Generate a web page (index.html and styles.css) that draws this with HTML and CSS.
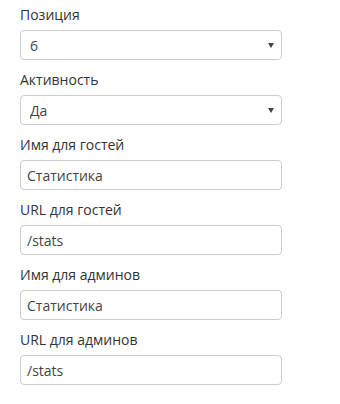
FILE: index.html
```html
<!DOCTYPE html>
<html lang="ru">
<head>
<meta charset="utf-8">
<link rel="stylesheet" href="styles.css">
</head>
<body>
<form class="form">
  <div class="group">
    <label class="label">Позиция</label>
    <div class="select-wrap">
      <select class="control select"><option>6</option></select>
      <span class="caret"></span>
    </div>
  </div>
  <div class="group">
    <label class="label">Активность</label>
    <div class="select-wrap">
      <select class="control select"><option>Да</option></select>
      <span class="caret"></span>
    </div>
  </div>
  <div class="group">
    <label class="label">Имя для гостей</label>
    <input class="control input" type="text" value="Статистика">
  </div>
  <div class="group">
    <label class="label">URL для гостей</label>
    <input class="control input" type="text" value="/stats">
  </div>
  <div class="group">
    <label class="label">Имя для админов</label>
    <input class="control input" type="text" value="Статистика">
  </div>
  <div class="group">
    <label class="label">URL для админов</label>
    <input class="control input" type="text" value="/stats">
  </div>
</form>
</body>
</html>
```

FILE: styles.css
```css
html, body {
  margin: 0;
  padding: 0;
  background: #fff;
}
body {
  font-family: "Open Sans", "Liberation Sans", sans-serif;
  font-size: 14px;
  color: #333;
}
.form {
  display: flex;
  flex-direction: column;
  gap: 10px;
  padding: 5px 0 0 20px;
  width: 262px;
}
.group {
  display: flex;
  flex-direction: column;
  gap: 5px;
}
.label {
  display: block;
  line-height: 20px;
  height: 20px;
  color: #333;
}
.control {
  box-sizing: border-box;
  width: 262px;
  height: 30px;
  margin: 0;
  border: 1px solid #ccc;
  border-radius: 4px;
  background: #fff;
  font-family: "Open Sans", "Liberation Sans", sans-serif;
  font-size: 14px;
  color: #444;
  outline: none;
}
.input {
  padding: 0 6px;
}
.select-wrap {
  position: relative;
  height: 30px;
}
.select {
  appearance: none;
  -webkit-appearance: none;
  padding: 0 0 0 9px;
}
.caret {
  position: absolute;
  right: 8px;
  top: 13px;
  width: 0;
  height: 0;
  border-left: 3px solid transparent;
  border-right: 3px solid transparent;
  border-top: 5px solid #444;
}
```
